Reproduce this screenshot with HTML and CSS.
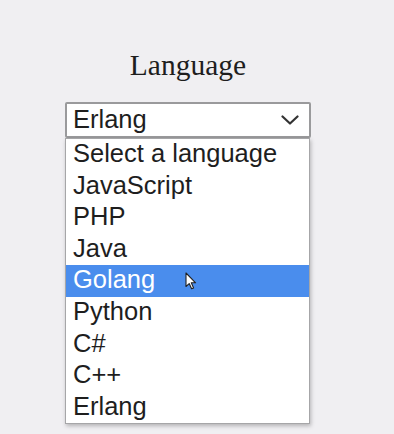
FILE: index.html
```html
<!DOCTYPE html>
<html>
<head>
<meta charset="utf-8">
<link rel="stylesheet" href="styles.css">
</head>
<body>
<div class="wrap">
  <h1 class="title">Language</h1>
  <div class="select">
    <span class="value">Erlang</span>
    <svg class="chev" width="18" height="10" viewBox="0 0 18 10"><path d="M1.5 1.5 L9 8.5 L16.5 1.5" fill="none" stroke="#333" stroke-width="2.2" stroke-linecap="round" stroke-linejoin="round"/></svg>
  </div>
  <ul class="list">
    <li class="opt">Select a language</li>
    <li class="opt">JavaScript</li>
    <li class="opt">PHP</li>
    <li class="opt">Java</li>
    <li class="opt active">Golang
      <svg class="cursor" width="12" height="18" viewBox="0 0 12 18"><path d="M1 1 L1 14.5 L4.2 11.6 L6.6 16.8 L8.6 15.9 L6.3 10.8 L10.6 10.8 Z" fill="#fff" stroke="#222" stroke-width="1.1" stroke-linejoin="round"/></svg>
    </li>
    <li class="opt">Python</li>
    <li class="opt">C#</li>
    <li class="opt">C++</li>
    <li class="opt">Erlang</li>
  </ul>
</div>
</body>
</html>
```
FILE: styles.css
```css
html, body {
  margin: 0;
  padding: 0;
  background: #f0eff2;
  height: 100%;
}
.wrap {
  width: 246px;
  margin-left: 65px;
  padding-top: 48px;
  display: flex;
  flex-direction: column;
}
.title {
  margin: 0 0 20px 0;
  font-family: "Liberation Serif", "Times New Roman", serif;
  font-weight: normal;
  font-size: 29.5px;
  line-height: 34px;
  color: #1e1e1e;
  text-align: center;
}
.select {
  box-sizing: border-box;
  height: 36px;
  border: 2px solid #9a9a9c;
  border-radius: 2px;
  background: #fff;
  display: flex;
  align-items: center;
  justify-content: space-between;
  padding: 0 10px 1px 6px;
  font-family: "Liberation Sans", Arial, sans-serif;
  font-size: 25.5px;
  color: #1e1e1e;
}
.chev {
  display: block;
  margin-top: 1px;
}
.list {
  list-style: none;
  margin: 0;
  padding: 0;
  width: 245px;
  box-sizing: border-box;
  border: 1px solid #a6a6a8;
  background: #fff;
  box-shadow: 1px 2px 4px rgba(0,0,0,0.25);
  font-family: "Liberation Sans", Arial, sans-serif;
  font-size: 25.5px;
  color: #1e1e1e;
}
.opt {
  box-sizing: border-box;
  height: 31.6px;
  line-height: 28.6px;
  padding-left: 7px;
  position: relative;
  white-space: nowrap;
}
.active {
  background: #4a8ded;
  color: #fff;
}
.cursor {
  position: absolute;
  left: 119px;
  top: 7px;
}
```
